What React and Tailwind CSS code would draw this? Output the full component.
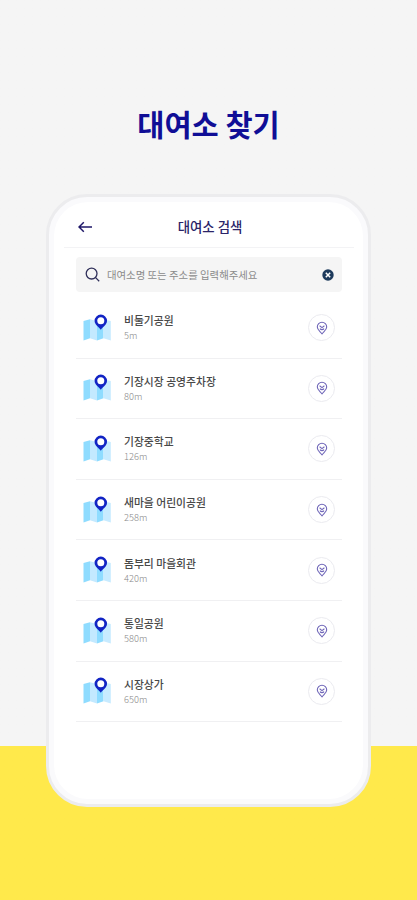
const stations = [
  { name: "비둘기공원", distance: "5m" },
  { name: "기장시장 공영주차장", distance: "80m" },
  { name: "기장중학교", distance: "126m" },
  { name: "새마을 어린이공원", distance: "258m" },
  { name: "돔부리 마을회관", distance: "420m" },
  { name: "통일공원", distance: "580m" },
  { name: "시장상가", distance: "650m" },
];

function MapIcon() {
  return (
    <svg viewBox="0 0 28 28" className="h-7 w-7 shrink-0">
      <path d="M0.5 7 L7 5.3 V24.3 L0.5 26.5 Z" fill="#8fdcff" />
      <path d="M7 5.3 L14 7 V26.5 L7 24.3 Z" fill="#c3e9ff" />
      <path d="M14 7 L20.5 5.3 V24.3 L14 26.5 Z" fill="#8fdcff" />
      <path d="M20.5 5.3 L27.8 7 V26.5 L20.5 24.3 Z" fill="#c8ebff" />
      <path
        d="M17.8 0.6 a6.2 6.2 0 0 1 6.2 6.2 c0 4 -3.8 5.6 -6.2 9 c-2.4 -3.4 -6.2 -5 -6.2 -9 a6.2 6.2 0 0 1 6.2 -6.2 Z"
        fill="#1224c4"
      />
      <circle cx="17.8" cy="6.7" r="3.5" fill="#fff" />
    </svg>
  );
}

function PinIcon() {
  return (
    <svg
      viewBox="0 0 12 14"
      className="h-3.5 w-3"
      fill="none"
      stroke="#6f66b8"
      strokeWidth="1.1"
      strokeLinejoin="round"
    >
      <path d="M6 1.2 a4.7 4.7 0 0 1 4.7 4.7 c0 2.9 -2.6 4.4 -4.7 7 c-2.1 -2.6 -4.7 -4.1 -4.7 -7 a4.7 4.7 0 0 1 4.7 -4.7 Z" />
      <path d="M3.6 4.8 L6 6.6 L8.4 4.8 M4 7.6 a2.4 2.4 0 0 0 4 0" />
    </svg>
  );
}

function StationRow({ name, distance }) {
  return (
    <li className="flex h-[60.6px] items-center border-b border-[#f0f0f2] px-[7px]">
      <MapIcon />
      <div className="ml-[13px] flex flex-1 flex-col pb-px">
        <span className="text-[10.8px] leading-4 font-medium text-[#484848]">
          {name}
        </span>
        <span className="text-[9.3px] leading-[14px] font-light text-[#888]">
          {distance}
        </span>
      </div>
      <button
        type="button"
        className="flex h-[27px] w-[27px] items-center justify-center rounded-full border border-[#ebebf0]"
      >
        <PinIcon />
      </button>
    </li>
  );
}

function App() {
  return (
    <div className="flex h-[900px] w-[417px] flex-col items-center overflow-hidden bg-linear-to-b from-[#f5f5f5] from-[746px] to-[#ffe94b] to-[746px] font-['Noto_Sans_CJK_KR',sans-serif]">
      <h1 className="mt-[103px] h-[42px] text-[29.5px] leading-[40px] font-bold whitespace-nowrap text-[#100e96]">
        대여소 찾기
      </h1>

      {/* Phone */}
      <div className="mt-[49px] h-[613px] w-[325px] rounded-[41px] border-[3px] border-[#ececee] bg-[#fafafc] p-[5px]">
        <div className="h-full rounded-[34px] bg-white pr-[9px] pl-[10px]">
          <header className="flex h-[46px] items-center border-b border-[#f3f3f5] px-[14px] pt-1">
            <svg
              viewBox="0 0 14 12"
              className="h-3 w-3.5"
              fill="none"
              stroke="#1e1768"
              strokeWidth="1.5"
            >
              <path d="M14 6 H1.2 M5.8 1.2 L1 6 L5.8 10.8" />
            </svg>
            <h2 className="flex-1 pr-3 text-center text-[13.4px] font-medium text-[#2b2468]">
              대여소 검색
            </h2>
          </header>

          <div className="px-[12px] pt-[9px]">
            <div className="flex h-[35px] items-center rounded-sm bg-[#f5f5f5] pr-[8px] pl-[9px]">
              <svg
                viewBox="0 0 16 16"
                className="h-4 w-4"
                fill="none"
                stroke="#30305a"
                strokeWidth="1.3"
              >
                <circle cx="6.6" cy="6.6" r="5.4" />
                <path d="M10.4 10.4 L14.2 14.2" />
              </svg>
              <span className="ml-[6px] flex-1 text-[10.4px] whitespace-nowrap text-[#8b8b8b]">
                대여소명 또는 주소를 입력해주세요
              </span>
              <svg viewBox="0 0 12 12" className="h-3 w-3">
                <circle cx="6" cy="6" r="5.7" fill="#1d3a5c" />
                <path
                  d="M3.8 3.8 L8.2 8.2 M8.2 3.8 L3.8 8.2"
                  stroke="#fff"
                  strokeWidth="1.5"
                />
              </svg>
            </div>

            <ul className="mt-[6px]">
              {stations.map((station) => (
                <StationRow key={station.name} {...station} />
              ))}
            </ul>
          </div>
        </div>
      </div>
    </div>
  );
}

export default App;
